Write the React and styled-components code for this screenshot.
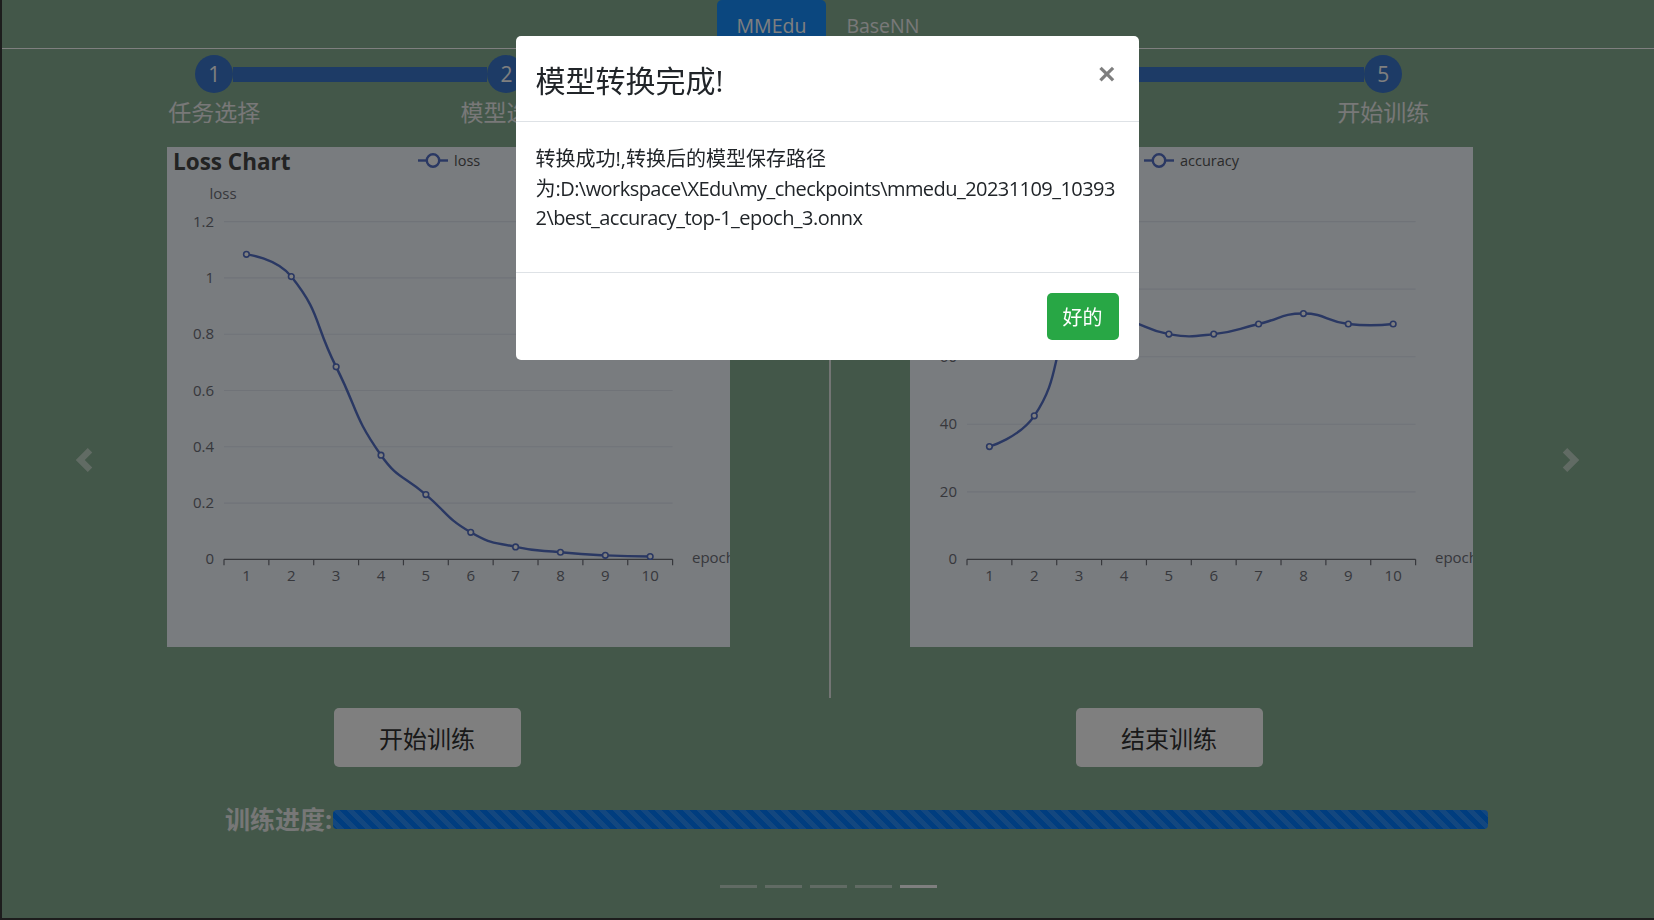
import React from "react";
import styled, { createGlobalStyle } from "styled-components";

const GlobalStyle = createGlobalStyle`
  html, body {
    margin: 0;
    padding: 0;
  }
  body {
    width: 1654px;
    height: 920px;
    overflow: hidden;
    background: #86ae92;
    font-family: "Open Sans", "Noto Sans CJK SC", sans-serif;
    color: #212529;
  }
`;

const Page = styled.div`
  position: relative;
  box-sizing: border-box;
  width: 1654px;
  height: 920px;
  border-left: 2px solid #3a3a3a;
  border-bottom: 2px solid #3a3a3a;
`;

const TabBar = styled.nav`
  display: flex;
  justify-content: center;
  border-bottom: 1px solid #ffffff;
  height: 48px;
`;

const Tab = styled.div`
  display: flex;
  align-items: center;
  padding: 3px 20px 0;
  font-size: 19.5px;
  border-radius: 5px 5px 0 0;
  color: ${(p) => (p.$active ? "#ffffff" : "#f2f2f2")};
  background: ${(p) => (p.$active ? "#168eff" : "transparent")};
`;

const Content = styled.div`
  padding-left: 66px;
`;

const Stepper = styled.div`
  display: grid;
  grid-template-columns: repeat(5, 292.3px);
  margin-top: 6px;
`;

const Step = styled.div`
  display: flex;
  flex-direction: column;
  align-items: center;
`;

const StepHead = styled.div`
  display: flex;
  align-items: center;
  width: 100%;
  height: 38px;
`;

const StepLine = styled.div`
  flex: 1;
  height: 15px;
  background: ${(p) => (p.$show ? "#3a76cc" : "transparent")};
`;

const StepCircle = styled.div`
  width: 38px;
  height: 38px;
  border-radius: 50%;
  background: #3a76cc;
  color: #ffffff;
  font-size: 21px;
  display: flex;
  align-items: center;
  justify-content: center;
`;

const StepLabel = styled.div`
  margin-top: 7px;
  font-size: 23px;
  line-height: 24px;
  color: #f0f0f0;
`;

const ChartsRow = styled.div`
  display: grid;
  grid-template-columns: 761px 2px 721px;
  margin-top: 23px;
`;

const ChartCol = styled.div`
  display: flex;
  justify-content: center;
  padding-bottom: 51px;
`;

const Divider = styled.div`
  background: #e6ebe8;
`;

const ChartCard = styled.div`
  width: 563px;
  height: 500px;
  background: #f2f8ff;
  overflow: hidden;

  svg {
    display: block;
  }
  text {
    font-family: "Open Sans", "Noto Sans CJK SC", sans-serif;
  }
`;

const ButtonsRow = styled.div`
  display: grid;
  grid-template-columns: 763px 721px;
  margin-top: 10px;
`;

const ActionButton = styled.button`
  justify-self: center;
  margin-right: 45px;
  width: 187px;
  height: 59px;
  border: none;
  border-radius: 5px;
  background: #ffffff;
  color: #333333;
  font-family: inherit;
  font-size: 24px;
`;

const ProgressRow = styled.div`
  display: flex;
  align-items: center;
  margin-top: 37px;
  padding-left: 157px;
`;

const ProgressLabel = styled.div`
  width: 108px;
  white-space: nowrap;
  font-size: 25px;
  line-height: 30px;
  font-weight: 700;
  color: #eeeeee;
`;

const ProgressBar = styled.div`
  width: 1155px;
  height: 19px;
  border-radius: 4px;
  background-color: #007bff;
  background-image: linear-gradient(
    45deg,
    rgba(255, 255, 255, 0.15) 25%,
    transparent 25%,
    transparent 50%,
    rgba(255, 255, 255, 0.15) 50%,
    rgba(255, 255, 255, 0.15) 75%,
    transparent 75%,
    transparent
  );
  background-size: 14px 14px;
`;

const Indicators = styled.div`
  display: flex;
  justify-content: center;
  margin-top: 51px;
`;

const Indicator = styled.span`
  width: 37px;
  height: 3px;
  margin: 0 4px;
  background: #ffffff;
  opacity: ${(p) => (p.$active ? 1 : 0.5)};
`;

const Arrow = styled.div`
  position: absolute;
  top: 448px;
  ${(p) => (p.$side === "left" ? "left: 70px;" : "right: 71px;")}
  width: 24px;
  height: 24px;
  opacity: 0.5;
`;

const ModalLayer = styled.div`
  position: fixed;
  inset: 0;
  background: rgba(0, 0, 0, 0.5);
  z-index: 10;
`;

const Dialog = styled.div`
  width: 623px;
  margin: 36px auto 0;
  background: #ffffff;
  border-radius: 5px;
  overflow: hidden;
`;

const DialogHeader = styled.div`
  display: flex;
  align-items: center;
  justify-content: space-between;
  box-sizing: border-box;
  height: 86px;
  padding: 0 20px;
  border-bottom: 1px solid #dee2e6;
`;

const DialogTitle = styled.h5`
  margin: 0;
  font-size: 30px;
  font-weight: 400;
  color: #212529;
`;

const CloseButton = styled.button`
  margin: 0 3px 9px 0;
  padding: 0;
  border: none;
  background: none;
  font-family: "Liberation Sans", Arial, sans-serif;
  font-size: 30px;
  font-weight: 700;
  line-height: 1;
  color: #000000;
  opacity: 0.5;
`;

const DialogBody = styled.div`
  padding: 22px 20px 19px;
`;

const DialogText = styled.p`
  margin: 0 0 20px;
  font-size: 20px;
  line-height: 29.5px;
  white-space: pre;
  color: #212529;
`;

const PathText = styled.span`
  letter-spacing: -0.55px;
`;

const DialogFooter = styled.div`
  display: flex;
  justify-content: flex-end;
  padding: 20px;
  border-top: 1px solid #dee2e6;
`;

const OkButton = styled.button`
  height: 47px;
  padding: 0 16px;
  border: none;
  border-radius: 5px;
  background: #28a745;
  color: #ffffff;
  font-family: inherit;
  font-size: 20px;
`;

const steps = ["任务选择", "模型选择", "数据集选择", "参数设置", "开始训练"];

const lossData = [1.084, 1.005, 0.684, 0.37, 0.23, 0.096, 0.044, 0.025, 0.014, 0.01];
const accData = [33.4, 42.5, 72.5, 71.0, 66.7, 66.7, 69.7, 72.8, 69.7, 69.7];

const PLOT = { left: 57, right: 505.6, top: 74.7, bottom: 412.3 };
const LINE = "#5470c6";
const AXIS = "#6e7079";

// echarts-like smoothing (smooth = 0.5)
function smoothPath(pts, smooth = 0.5) {
  const cps = pts.map((p, i) => {
    if (i === 0 || i === pts.length - 1) return { out: p, in: p };
    const prev = pts[i - 1];
    const next = pts[i + 1];
    const vx = next[0] - prev[0];
    const vy = next[1] - prev[1];
    const d0 = Math.hypot(p[0] - prev[0], p[1] - prev[1]);
    const d1 = Math.hypot(next[0] - p[0], next[1] - p[1]);
    const r = d1 / (d0 + d1);
    return {
      out: [p[0] + vx * smooth * r, p[1] + vy * smooth * r],
      in: [p[0] - vx * smooth * (1 - r), p[1] - vy * smooth * (1 - r)],
    };
  });
  let d = `M${pts[0][0]},${pts[0][1]}`;
  for (let i = 1; i < pts.length; i++) {
    d += ` C${cps[i - 1].out.join(",")} ${cps[i].in.join(",")} ${pts[i].join(",")}`;
  }
  return d;
}

const LineChart = ({ title, legend, legendX, yName, yMax, yStep, data }) => {
  const { left, right, top, bottom } = PLOT;
  const band = (right - left) / data.length;
  const pts = data.map((v, i) => [
    left + band * (i + 0.5),
    bottom - (v / yMax) * (bottom - top),
  ]);
  const ticks = [];
  for (let k = 0; k * yStep <= yMax + 1e-9; k++) ticks.push(k * yStep);
  const yOf = (v) => bottom - (v / yMax) * (bottom - top);

  return (
    <ChartCard>
      <svg width="563" height="500" viewBox="0 0 563 500">
        <text x="6" y="23" fontSize="22.5" fontWeight="700" fill="#464646">
          {title}
        </text>
        <line x1={legendX} x2={legendX + 30} y1="13.5" y2="13.5" stroke={LINE} strokeWidth="2.4" />
        <circle cx={legendX + 15} cy="13.5" r="6.2" fill="#ffffff" stroke={LINE} strokeWidth="2.4" />
        <text x={legendX + 36} y="18.5" fontSize="14.5" fill="#555555">
          {legend}
        </text>
        <text x="56" y="52" fontSize="15" textAnchor="middle" fill={AXIS}>
          {yName}
        </text>
        {ticks.map((v) => (
          <g key={v}>
            {v > 0 && (
              <line x1={left} x2={right} y1={yOf(v)} y2={yOf(v)} stroke="#e0e6f1" strokeWidth="1.2" />
            )}
            <text x="47" y={yOf(v) + 5} fontSize="15" textAnchor="end" fill={AXIS}>
              {Number(v.toFixed(1)).toString()}
            </text>
          </g>
        ))}
        <line x1={left} x2={right} y1={bottom} y2={bottom} stroke={AXIS} strokeWidth="1.2" />
        {Array.from({ length: data.length + 1 }, (_, k) => (
          <line
            key={k}
            x1={left + band * k}
            x2={left + band * k}
            y1={bottom}
            y2={bottom + 6}
            stroke={AXIS}
            strokeWidth="1.2"
          />
        ))}
        {pts.map((p, i) => (
          <text key={i} x={p[0]} y={bottom + 21.5} fontSize="15" textAnchor="middle" fill={AXIS}>
            {i + 1}
          </text>
        ))}
        <text x="525" y={bottom + 4} fontSize="15" fill={AXIS}>
          epoch
        </text>
        <path d={smoothPath(pts)} fill="none" stroke={LINE} strokeWidth="2.4" />
        {pts.map((p, i) => (
          <circle key={i} cx={p[0]} cy={p[1]} r="2.8" fill="#ffffff" stroke={LINE} strokeWidth="1.6" />
        ))}
      </svg>
    </ChartCard>
  );
};

const Chevron = ({ dir }) => (
  <svg width="24" height="24" viewBox="0 0 8 8" fill="#ffffff">
    <path
      d={
        dir === "left"
          ? "M5.25 0l-4 4 4 4 1.5-1.5-2.5-2.5 2.5-2.5-1.5-1.5z"
          : "M2.75 0l-1.5 1.5 2.5 2.5-2.5 2.5 1.5 1.5 4-4-4-4z"
      }
    />
  </svg>
);

const App = () => {
  return (
    <>
      <GlobalStyle />
      <Page>
        <TabBar>
          <Tab $active>MMEdu</Tab>
          <Tab>BaseNN</Tab>
        </TabBar>
        <Content>
          <Stepper>
            {steps.map((label, i) => (
              <Step key={label}>
                <StepHead>
                  <StepLine $show={i > 0} />
                  <StepCircle>{i + 1}</StepCircle>
                  <StepLine $show={i < steps.length - 1} />
                </StepHead>
                <StepLabel>{label}</StepLabel>
              </Step>
            ))}
          </Stepper>
          <ChartsRow>
            <ChartCol>
              <LineChart
                title="Loss Chart"
                legend="loss"
                legendX={251}
                yName="loss"
                yMax={1.2}
                yStep={0.2}
                data={lossData}
              />
            </ChartCol>
            <Divider />
            <ChartCol>
              <LineChart
                title="Accuracy Chart"
                legend="accuracy"
                legendX={234}
                yName="accuracy"
                yMax={100}
                yStep={20}
                data={accData}
              />
            </ChartCol>
          </ChartsRow>
          <ButtonsRow>
            <ActionButton>开始训练</ActionButton>
            <ActionButton>结束训练</ActionButton>
          </ButtonsRow>
          <ProgressRow>
            <ProgressLabel>训练进度:</ProgressLabel>
            <ProgressBar />
          </ProgressRow>
        </Content>
        <Indicators>
          {[0, 1, 2, 3, 4].map((i) => (
            <Indicator key={i} $active={i === 4} />
          ))}
        </Indicators>
        <Arrow $side="left">
          <Chevron dir="left" />
        </Arrow>
        <Arrow $side="right">
          <Chevron dir="right" />
        </Arrow>
        <ModalLayer>
          <Dialog>
            <DialogHeader>
              <DialogTitle>模型转换完成!</DialogTitle>
              <CloseButton>×</CloseButton>
            </DialogHeader>
            <DialogBody>
              <DialogText>
                {"转换成功!,转换后的模型保存路径\n为"}
                <PathText>
                  {":D:\\workspace\\XEdu\\my_checkpoints\\mmedu_20231109_10393\n2\\best_accuracy_top-1_epoch_3.onnx"}
                </PathText>
              </DialogText>
            </DialogBody>
            <DialogFooter>
              <OkButton>好的</OkButton>
            </DialogFooter>
          </Dialog>
        </ModalLayer>
      </Page>
    </>
  );
};

export default App;
